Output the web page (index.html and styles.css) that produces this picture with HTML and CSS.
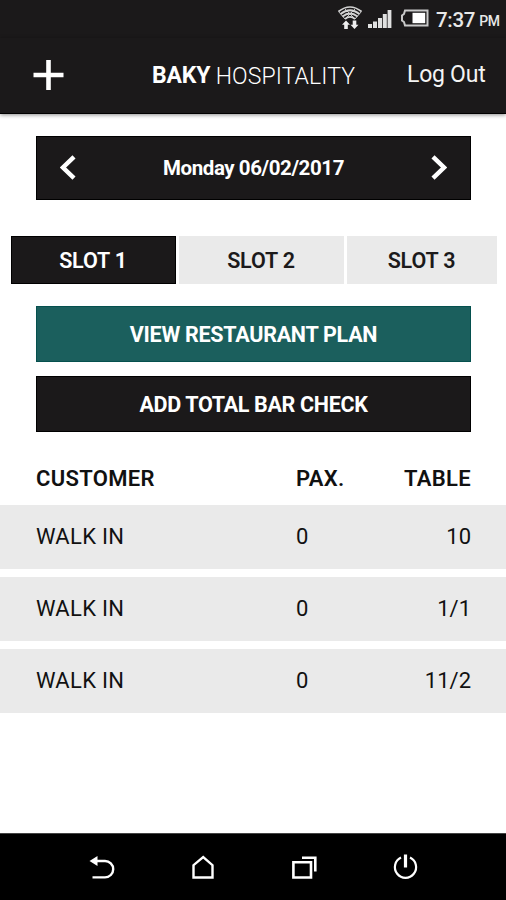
FILE: index.html
```html
<!DOCTYPE html>
<html lang="en">
<head>
<meta charset="utf-8">
<title>Baky Hospitality</title>
<link rel="stylesheet" href="styles.css">
</head>
<body>
<div class="screen">
  <div class="status">
    <svg class="wifi" width="26" height="26" viewBox="0 0 26 26" fill="none" stroke="#d4d4d4" stroke-width="1.7">
      <path d="M1.5 6.5Q13 -2.5 24.500 6.500M3.500 9Q13 1.500 22.500 9M5.500 11.500Q13 5.500 20.500 11.500M8 14Q13 9.800 18 14"/>
      <path d="M1.500 6.500L8 14M24.500 6.500L18 14M8 4L17 13M18 4L9 13" stroke-width=".9"/>
      <path d="M9 15.500l4 4.200H10.800v4.300H7.200v-4.300H5zM17.500 24l-4-4.200h2.200v-4.300h3.600v4.300h2.200z" fill="#eee" stroke="none"/>
    </svg>
    <svg class="signal" width="24" height="20" viewBox="0 0 24 20" fill="#e0e0e0">
      <path d="M0 15h4v4H0zM5 12.500h4V19H5zM10 9h4v10h-4zM14.800 5h4v14h-4zM19.600 1h3.800v18h-3.800z"/>
    </svg>
    <svg class="battery" width="29" height="18" viewBox="0 0 29 18">
      <path d="M5 1.500h22.500v15H5l-1-3.500-2-1.500v-5L4 5z" fill="none" stroke="#c9c9c9" stroke-width="2"/>
      <path d="M12.500 3.800h12.700v10.400H12.500z" fill="#fff"/>
    </svg>
    <span class="clock">7:37</span><span class="meridiem">PM</span>
  </div>
  <header class="header">
    <svg class="plus" width="32" height="32" viewBox="0 0 32 32"><path d="M15.500 1v30M.500 16h30" stroke="#fff" stroke-width="4.600"/></svg>
    <h1 class="brand"><b>BAKY</b><span>HOSPITALITY</span></h1>
    <a class="logout">Log Out</a>
  </header>
  <main class="main">
    <div class="date">
      <svg width="16" height="26" viewBox="0 0 16 26"><path d="M14 1.800L3 12.500l11 10.700" fill="none" stroke="#fff" stroke-width="4.400"/></svg>
      <span>Monday 06/02/2017</span>
      <svg width="16" height="26" viewBox="0 0 16 26"><path d="M2 1.800L13 12.500 2 23.200" fill="none" stroke="#fff" stroke-width="4.400"/></svg>
    </div>
    <div class="slots">
      <div class="slot active"><span>SLOT 1</span></div>
      <div class="slot"><span>SLOT 2</span></div>
      <div class="slot"><span>SLOT 3</span></div>
    </div>
    <div class="button plan"><span>VIEW RESTAURANT PLAN</span></div>
    <div class="button check"><span>ADD TOTAL BAR CHECK</span></div>
    <div class="grid head"><span>CUSTOMER</span><span>PAX.</span><span>TABLE</span></div>
    <div class="rows">
      <div class="grid row"><span class="name">WALK IN</span><span>0</span><span>10</span></div>
      <div class="grid row"><span class="name">WALK IN</span><span>0</span><span>1/1</span></div>
      <div class="grid row"><span class="name">WALK IN</span><span>0</span><span>11/2</span></div>
    </div>
  </main>
  <nav class="nav">
    <svg width="28" height="28" viewBox="0 0 28 28" fill="none" stroke="#fff" stroke-width="2.400"><path d="M6 9h11a8.200 8.200 0 0 1 0 16.400H4.500"/><path d="M1.500 9l8-5v10z" fill="#fff" stroke="none"/></svg>
    <svg width="28" height="28" viewBox="0 0 28 28" fill="none" stroke="#fff" stroke-width="2.400"><path d="M4.500 25.500V13.200L14.200 5l9.300 8.200v12.300z"/></svg>
    <svg width="28" height="28" viewBox="0 0 28 28" fill="none" stroke="#fff" stroke-width="2.600"><path d="M3.400 10.300h17.600v15.200h-17.600zM12 5.800h13.300v13.800"/></svg>
    <svg width="28" height="28" viewBox="0 0 28 28" fill="none" stroke="#fff" stroke-width="2.200"><path d="M10 5.600a10.600 10.600 0 1 0 9 0"/><path d="M14.500 2.500v13" stroke-width="3.200"/></svg>
  </nav>
</div>
</body>
</html>
```
FILE: styles.css
```css
* { box-sizing: border-box; }
body { margin: 0; background: #fff; font-family: Roboto, "Liberation Sans", sans-serif; }
.screen { width: 506px; height: 900px; display: flex; flex-direction: column; overflow: hidden; }
svg { display: block; flex: none; }
.status { height: 38px; background: #1b191a; display: flex; align-items: center; padding: 0 7px 0 337px; color: #e8e8e8; white-space: nowrap; }
.wifi { margin-top: -2px; }
.signal { margin: 0 0 0 5px; }
.battery { margin-left: 8px; margin-top: -2px; }
.clock { margin-left: 7px; font-size: 20.5px; font-weight: 500; line-height: 38px; letter-spacing: -.3px; padding-top: 1px; }
.meridiem { margin-left: 4px; font-size: 14px; font-weight: 500; padding-top: 4px; letter-spacing: -.3px; }
.header { height: 76px; background: #1b191a; border-bottom: 1px solid #000; box-shadow: 0 1px 4px rgba(0,0,0,.45); display: grid; grid-template-columns: 119px 1fr 99px; align-items: center; padding-left: 33px; color: #fff; z-index: 1; }
.plus { margin-top: -1px; }
.brand { margin: 2px 0 0; font-size: 23px; font-weight: 300; display: flex; gap: 5.5px; line-height: 30px; white-space: nowrap; letter-spacing: .1px; }
.brand b { font-weight: 700; margin-top: -1px; letter-spacing: -.2px; }
.logout { font-size: 23px; line-height: 30px; white-space: nowrap; color: #f4f4f4; letter-spacing: -.25px; margin-top: -1px; }
.main { flex: 1; }
.date { height: 64px; margin: 22px 35px 0 36px; padding: 0 23px; background: #1b191a; border: 1px solid #000; color: #fff; display: flex; align-items: center; justify-content: space-between; font-size: 20.5px; font-weight: 700; letter-spacing: -.42px; }
.slots { display: grid; grid-template-columns: 165px 165px 150px; gap: 3px; height: 48px; margin: 36px 9px 0 11px; font-size: 21.5px; font-weight: 600; letter-spacing: -.15px; color: #1c1a1b; }
.slot { display: flex; align-items: center; justify-content: center; background: #eaeaea; padding-right: 1px; }
.slot.active { background: #1b191a; color: #fff; border: 1px solid #000; }
.button { height: 56px; margin: 22px 35px 0 36px; display: flex; align-items: center; justify-content: center; color: #fff; font-size: 21.5px; font-weight: 700; letter-spacing: -.27px; white-space: nowrap; }
.plan { background: #1b5f5d; border: 1px solid #05504e; }
.check { margin-top: 14px; background: #1b191a; border: 1px solid #000; letter-spacing: -.33px; }
.grid { display: grid; grid-template-columns: 260px 80px 1fr; align-items: center; padding: 0 35px 0 36px; font-size: 22px; color: #111; }
.grid span:last-child { text-align: right; }
.head { height: 52px; margin-top: 21px; font-weight: 600; padding-bottom: 1px; letter-spacing: .3px; }
.rows { display: grid; gap: 8px; }
.row { height: 64px; background: #eaeaea; padding-bottom: 2px; }
.name { letter-spacing: .3px; }
.nav { height: 67px; background: #000; display: grid; grid-template-columns: repeat(4, 28px); column-gap: 73px; padding: 0 0 2px 88px; align-items: center; border-top: 1px solid #444; }
```
